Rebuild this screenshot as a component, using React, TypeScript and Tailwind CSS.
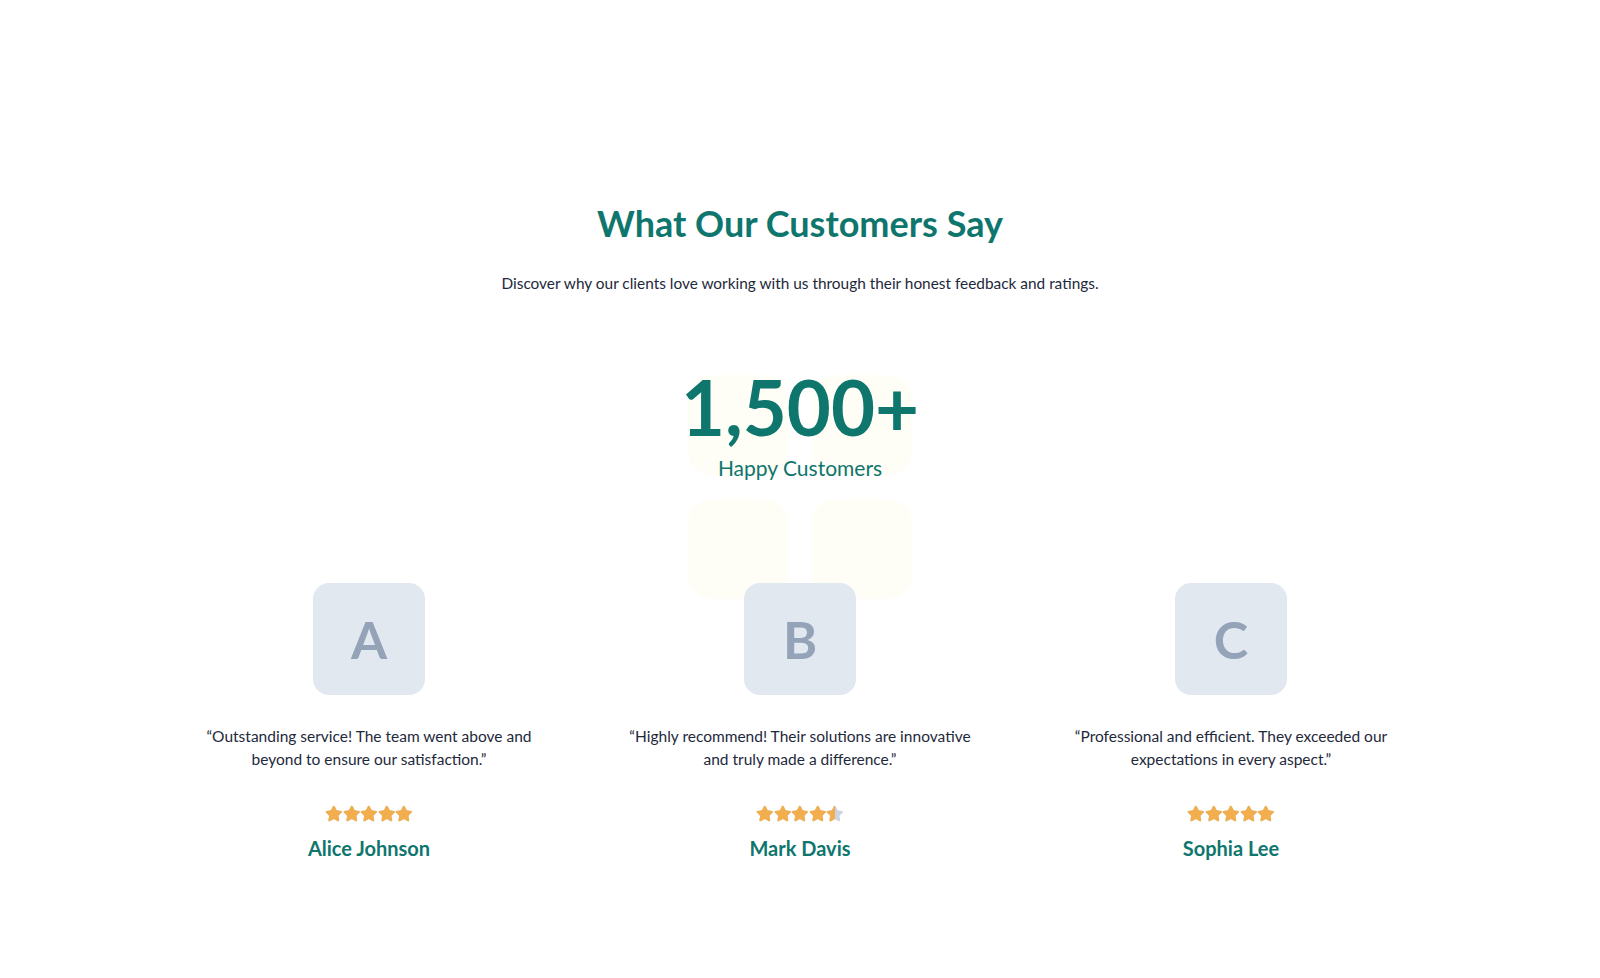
import { FaStar } from "react-icons/fa";

type Testimonial = {
  letter: string;
  quote: string;
  rating: number;
  name: string;
};

const testimonials: Testimonial[] = [
  {
    letter: "A",
    quote: "“Outstanding service! The team went above and beyond to ensure our satisfaction.”",
    rating: 5,
    name: "Alice Johnson",
  },
  {
    letter: "B",
    quote: "“Highly recommend! Their solutions are innovative and truly made a difference.”",
    rating: 4.5,
    name: "Mark Davis",
  },
  {
    letter: "C",
    quote: "“Professional and efficient. They exceeded our expectations in every aspect.”",
    rating: 5,
    name: "Sophia Lee",
  },
];

const Stars = ({ rating }: { rating: number }) => (
  <div className="flex items-center justify-center">
    {[0, 1, 2, 3, 4].map((i) => {
      const fill = Math.max(0, Math.min(1, rating - i));
      return (
        <span key={i} className="relative inline-block h-[17px] w-[17.6px]">
          <FaStar className="absolute left-0 top-0 h-[17px] w-[17.6px] text-[#cbd5e1]" />
          <span className="absolute left-0 top-0 h-full overflow-hidden" style={{ width: `${fill * 100}%` }}>
            <FaStar className="h-[17px] w-[17.6px] text-[#f2ad4c]" />
          </span>
        </span>
      );
    })}
  </div>
);

const Card = ({ t }: { t: Testimonial }) => (
  <div className="flex flex-col items-center text-center">
    <div className="relative z-10 flex h-28 w-28 items-center justify-center rounded-2xl bg-[#e2e8f0]">
      <span className="font-['Lato',sans-serif] text-[52px] font-bold text-[#94a3b8]">{t.letter}</span>
    </div>
    <p className="mt-[30px] max-w-[350px] text-[15.5px] leading-[22.5px] text-[#1e293b]">{t.quote}</p>
    <div className="mt-[35px]">
      <Stars rating={t.rating} />
    </div>
    <h3 className="mt-3 text-xl font-bold text-[#0f766e]">{t.name}</h3>
  </div>
);

export default function App() {
  return (
    <div className="min-h-screen bg-white font-['Lato',sans-serif]">
      <section className="px-8 pt-[203px] pb-24">
        <div className="text-center">
          <h2 className="text-4xl font-bold text-[#0f766e]">What Our Customers Say</h2>
          <p className="mt-7 text-[15.4px] leading-6 text-[#1e293b]">
            Discover why our clients love working with us through their honest feedback and ratings.
          </p>
        </div>

        <div className="relative mt-[68px] flex flex-col items-center">
          <div className="pointer-events-none absolute left-1/2 top-[12px] grid -translate-x-1/2 grid-cols-2 gap-6">
            <div className="h-[100px] w-[100px] rounded-3xl bg-[#fefdf6]" />
            <div className="h-[100px] w-[100px] rounded-3xl bg-[#fefdf6]" />
            <div className="h-[100px] w-[100px] rounded-3xl bg-[#fefdf6]" />
            <div className="h-[100px] w-[100px] rounded-3xl bg-[#fefdf6]" />
          </div>
          <div className="relative pt-[6px] text-[76px] font-bold leading-none text-[#0f766e]">1,500+</div>
          <div className="relative mt-[9px] text-[21px] leading-7 text-[#0f766e]">Happy Customers</div>
        </div>

        <div className="mx-auto mt-[101px] grid max-w-[1261px] grid-cols-3 gap-8">
          {testimonials.map((t) => (
            <Card key={t.letter} t={t} />
          ))}
        </div>
      </section>
    </div>
  );
}
